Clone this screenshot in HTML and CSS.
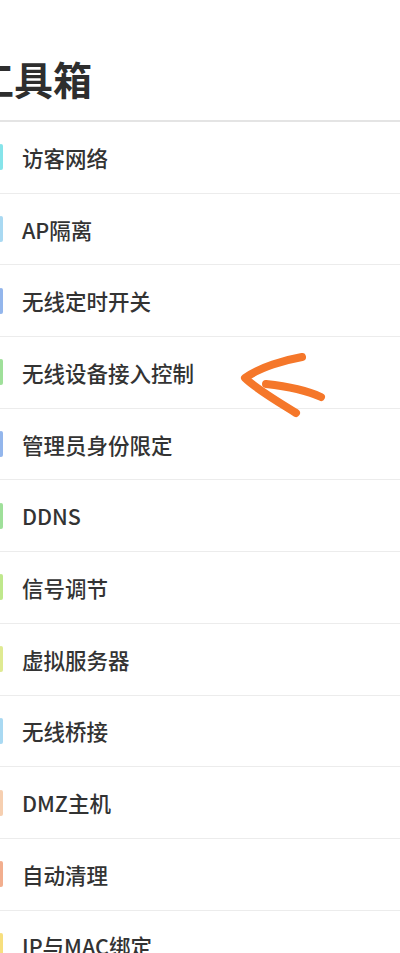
FILE: index.html
```html
<!DOCTYPE html>
<html lang="zh-CN">

<head>
    <meta charset="UTF-8">
    <meta name="viewport" content="width=device-width, initial-scale=1.0">
    <title>工具箱</title>
    <link rel="stylesheet" href="styles.css">
</head>

<body>
    <header class="top">
        <h1 class="title">工具箱</h1>
    </header>
    <ul class="tools">
        <li class="tool"><span class="mark cyan"></span>访客网络</li>
        <li class="tool"><span class="mark sky"></span>AP隔离</li>
        <li class="tool"><span class="mark blue"></span>无线定时开关</li>
        <li class="tool"><span class="mark green"></span>无线设备接入控制</li>
        <li class="tool"><span class="mark blue"></span>管理员身份限定</li>
        <li class="tool"><span class="mark green"></span>DDNS</li>
        <li class="tool"><span class="mark lime"></span>信号调节</li>
        <li class="tool"><span class="mark olive"></span>虚拟服务器</li>
        <li class="tool"><span class="mark sky"></span>无线桥接</li>
        <li class="tool"><span class="mark peach"></span>DMZ主机</li>
        <li class="tool"><span class="mark salmon"></span>自动清理</li>
        <li class="tool"><span class="mark yellow"></span>IP与MAC绑定</li>
    </ul>
    <svg class="arrow" width="100" height="80" viewBox="0 0 100 80">
        <path d="M62 17 C45 20 20 27 5 38 C15 48 32 58 56 73" fill="none" stroke="#f5772a" stroke-width="8" stroke-linecap="round" stroke-linejoin="round" />
        <path d="M26 44 C45 46 66 50 81 57" fill="none" stroke="#f5772a" stroke-width="8" stroke-linecap="round" />
    </svg>
</body>

</html>
```

FILE: styles.css
```css
* {
    margin: 0;
    padding: 0;
    box-sizing: border-box;
}

body {
    background-color: #fff;
    font-family: "Noto Sans CJK SC", "Noto Sans", sans-serif;
    color: #333;
    overflow: hidden;
    position: relative;
}

.top {
    height: 122px;
    padding-top: 36px;
    border-bottom: 2px solid #e4e4e4;
    display: flex;
    align-items: center;
}

.title {
    margin-left: -25px;
    font-size: 39px;
    font-weight: 700;
    color: #2e2e2e;
}

.tools {
    list-style: none;
}

.tool {
    height: 71.7px;
    display: flex;
    align-items: center;
    padding-left: 22px;
    font-size: 21.5px;
    font-weight: 500;
    border-bottom: 1px solid #ececec;
    position: relative;
}

.mark {
    position: absolute;
    left: -1px;
    top: 50%;
    width: 4px;
    height: 26px;
    margin-top: -13px;
    border-radius: 2px;
}

.cyan { background-color: #86e4ea; }
.sky { background-color: #a9d9f2; }
.blue { background-color: #93b6ec; }
.green { background-color: #9fe09a; }
.lime { background-color: #bfe88c; }
.olive { background-color: #dfea92; }
.peach { background-color: #f6cfb0; }
.salmon { background-color: #f2ae8e; }
.yellow { background-color: #f7df7e; }

.arrow {
    position: absolute;
    left: 240px;
    top: 340px;
}
```
